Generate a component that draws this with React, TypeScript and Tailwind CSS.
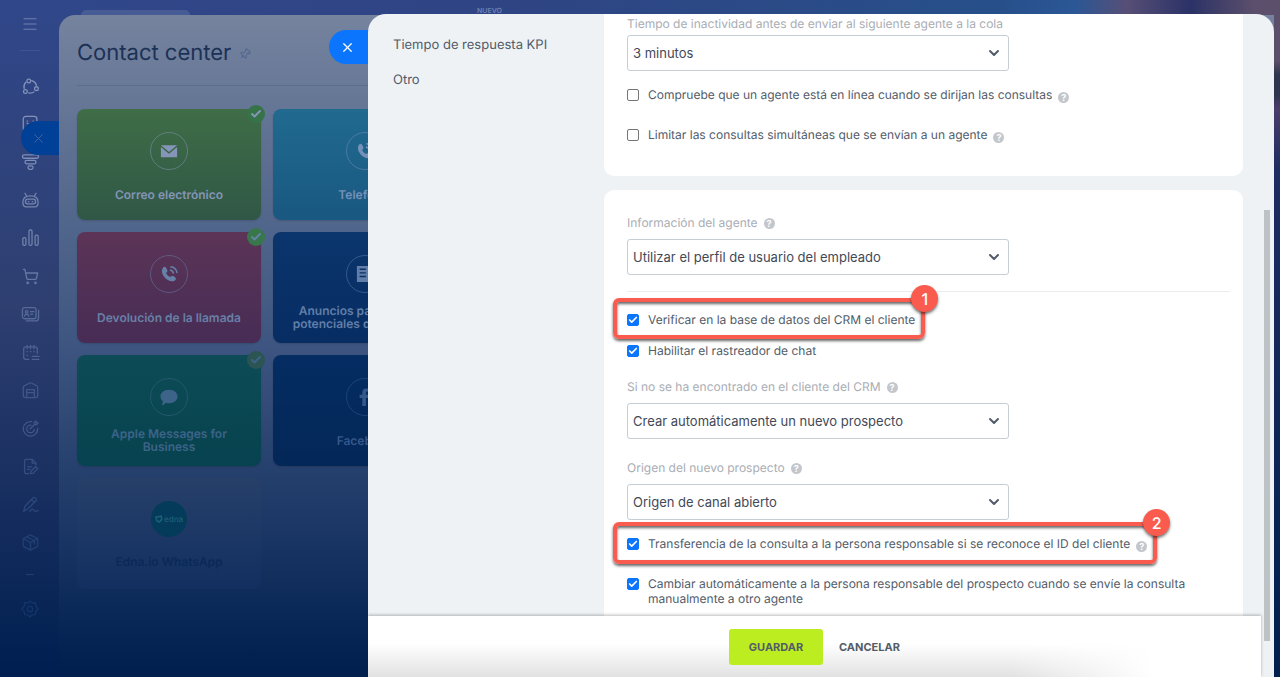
import { useId } from 'react';
import type { ReactNode } from 'react';
import { Check, ChevronDown, Menu, Pin, ShoppingCart, X } from 'lucide-react';

const RAIL_ICONS: { name: string; tone: string; art: ReactNode }[] = [
  {
    name: 'Colaboración',
    tone: 'text-[#8391bb]',
    art: (
      <>
        <circle cx="8" cy="3.500" r="2.2" />
        <circle cx="4" cy="16" r="2.2" />
        <circle cx="17" cy="12.500" r="2.2" />
        <path d="M2.500 12.500A8 8 0 0 1 4.500 5M11.500 3A8 8 0 0 1 17 8.500M14 16.500A8 8 0 0 1 8 17.500" />
      </>
    ),
  },
  {
    name: 'Feed',
    tone: 'text-[#8391bb]',
    art: (
      <>
        <rect x="1.500" y="0.500" width="16" height="17" rx="3" />
        <path d="M6 6h.5M13 6h.5M6 8.500q3.500 3 7.500 0" />
      </>
    ),
  },
  {
    name: 'CRM',
    tone: 'text-[#7f8eb5]',
    art: (
      <>
        <rect x="0.500" y="1" width="19" height="4" rx="2" />
        <rect x="3.500" y="7.500" width="13" height="4" rx="2" />
        <rect x="7" y="14" width="6" height="4" rx="2" />
      </>
    ),
  },
  {
    name: 'Automatización',
    tone: 'text-[#7585ac]',
    art: (
      <>
        <path d="M3.500 1.500l2 3.500M16.500 1.500l-2 3.500M1 12c0-5 4-7.500 9-7.500s9 2.500 9 7.500c0 4-1 5.500-4 5.500H5c-3 0-4-1.500-4-5.500z" />
        <rect x="4" y="8.500" width="12" height="5.500" rx="2.700" />
        <path d="M7.500 11.200h.6M12 11.200h.6" />
      </>
    ),
  },
  {
    name: 'Analítica',
    tone: 'text-[#7083aa]',
    art: (
      <>
        <rect x="1" y="9" width="3.600" height="9" rx="1.500" />
        <rect x="8.200" y="0" width="3.600" height="18" rx="1.500" />
        <rect x="15.400" y="6" width="3.600" height="12" rx="1.500" />
      </>
    ),
  },
  { name: 'Tienda', tone: 'text-[#6478a2]', art: <ShoppingCart width={20} height={20} strokeWidth={1.8} /> },
  {
    name: 'Contactos',
    tone: 'text-[#566b98]',
    art: (
      <>
        <rect x="0.500" y="2" width="16" height="13" rx="2.500" />
        <circle cx="5.500" cy="7" r="1.500" />
        <path d="M3 12c.5-3 4.500-3 5 0M10 6.500h4M10 9.500h2.500M19.500 5v9q0 3.500-3.500 3.500H5" />
      </>
    ),
  },
  {
    name: 'Calendario',
    tone: 'text-[#4d6292]',
    art: (
      <>
        <path d="M8 18H4.500Q2 18 2 15.500V6q0-2.500 2.500-2.500h11Q18 3.500 18 6v5M6 1.500v4M10 1.500v4M14 1.500v4M12 14.500h8M12 18h8" />
        <path d="M6 9h.5M10 9h.5M14 9h.5M6 13.500h.5" />
      </>
    ),
  },
  {
    name: 'Almacén',
    tone: 'text-[#425789]',
    art: (
      <>
        <path d="M1.500 6.500Q1.500 5 3 4.200L8.500 1.500q1.500-.7 3 0L17 4.200q1.500.8 1.500 2.300V16q0 2.500-2.500 2.500H4Q1.500 18.500 1.500 16z" />
        <path d="M5.500 18V9h9v9M5.500 12.500h9" />
      </>
    ),
  },
  {
    name: 'Objetivos',
    tone: 'text-[#425789]',
    art: (
      <path d="M11.500 2A8.500 8.500 0 1 0 18.500 10M10.500 6A4.500 4.500 0 1 0 14.500 11M9.500 10.500L15 5M14.500 5.500V3l2-2v2.500H19L17 5.500z" />
    ),
  },
  {
    name: 'Documentos',
    tone: 'text-[#364f82]',
    art: (
      <>
        <path d="M8 18.500H5Q3 18.500 3 16.500v-13Q3 1.500 5 1.500h7l4.500 4.500v2M12 1.500V6h4.500M6.500 10.500H11M6.500 13.500H9" />
        <path d="M10 18.500l.5-3L16 10l2.500 2.500L13 18z" />
      </>
    ),
  },
  {
    name: 'Firma',
    tone: 'text-[#2c487c]',
    art: (
      <>
        <path d="M2 18l1.500-6L13 2q1.500-1 3 .5T16.500 5.500L7 15l-5 3zM11 4l3.500 3.500" />
        <path d="M9 18q3-4 4.500-1.500T19 17" />
      </>
    ),
  },
  {
    name: 'Market',
    tone: 'text-[#223f74]',
    art: <path d="M10 1l8.500 4.500v9L10 19l-8.500-4.500v-9zM1.500 5.500L10 10l8.500-4.500M10 10v9M6 3.500l8.500 4.500v4" />,
  },
];

const PHONE = (
  <>
    <path d="M3 3.500C5 1 6 2 7.500 4.500S8 7.500 7 8.500s3.500 5.500 5 4.500 2-1.500 4 0 2.500 2.500 0 4.500C9.500 21-1 10 3 3.500z" fill="currentColor" />
    <path d="M11 5.500q3.500.5 4 4M11.500 2q6.500.5 7.500 7" fill="none" stroke="currentColor" strokeWidth="1.600" />
  </>
);

const TILES: { label: string; bg: string; tone: string; done: string; art: ReactNode }[] = [
  {
    label: 'Correo electrónico',
    bg: 'from-[#3f6d46] to-[#305746]',
    tone: 'text-[#8495b8]',
    done: 'bg-[#367349]',
    art: <path d="M1 3.500h18L10 11zM1 5.500l9 7.500 9-7.500V17H1z" fill="currentColor" />,
  },
  { label: 'Telefonía', bg: 'from-[#216a8f] to-[#195880]', tone: 'text-[#7590b9]', done: '', art: PHONE },
  {
    label: 'Devolución de la llamada',
    bg: 'from-[#5c3457] to-[#472c55]',
    tone: 'text-[#6780a6]',
    done: 'bg-[#38764b]',
    art: PHONE,
  },
  {
    label: 'Anuncios para clientes potenciales de Facebook',
    bg: 'from-[#0b356d] to-[#072d63]',
    tone: 'text-[#617ea8]',
    done: '',
    art: <path fillRule="evenodd" d="M1 1h13v18H1zM4 4v1.500h7V4zM4 8v1.500h7V8zM4 12v1.500h7V12zM15 5h4v13h-4z" fill="currentColor" />,
  },
  {
    label: 'Apple Messages for Business',
    bg: 'from-[#0d4c56] to-[#06424f]',
    tone: 'text-[#3d6388]',
    done: 'bg-[#2b5453]',
    art: <path d="M10 2c5.500 0 9.500 3.200 9.500 7.500S15.500 17 10 17q-2 0-3.500-.6Q4 19.500 2 19q1.500-2 1-4.200Q.5 12.500.5 9.500C.5 5.200 4.500 2 10 2z" fill="currentColor" />,
  },
  {
    label: 'Facebook',
    bg: 'from-[#052d63] to-[#032757]',
    tone: 'text-[#36578a]',
    done: '',
    art: <path d="M7 20v-9H4V7.500h3V5q0-4.500 4.500-4.500H15V4h-2q-2 0-2 1.500v2h4l-.6 3.500H11v9z" fill="currentColor" />,
  },
];

function RailIcon({ name, tone, art }: { name: string; tone: string; art: ReactNode }) {
  return (
    <button type="button" aria-label={name} className={`block h-5 w-5 shrink-0 ${tone}`}>
      <svg viewBox="0 0 20 20" className="h-[17px] w-[17px] overflow-visible" fill="none" stroke="currentColor" strokeWidth="1.5" strokeLinecap="round" strokeLinejoin="round">
        {art}
      </svg>
    </button>
  );
}

function Help() {
  return (
    <button
      type="button"
      aria-label="Ayuda"
      className="flex h-[11px] w-[11px] shrink-0 items-center justify-center rounded-full bg-[#c3c7cc] text-[9px] leading-none font-bold text-white"
    >
      ?
    </button>
  );
}

function SelectField({ label, value, help = false }: { label: string; value: string; help?: boolean }) {
  const id = useId();
  return (
    <div>
      <div className="flex h-4 items-center gap-[6px]">
        <label htmlFor={id} className="text-[12px] leading-4 whitespace-nowrap text-[#a9adb4]">{label}</label>
        {help && <Help />}
      </div>
      <div className={`relative w-[382px] max-w-full ${help ? 'mt-2' : 'mt-[3px]'}`}>
        <select
          id={id}
          defaultValue={value}
          className="block h-9 w-full appearance-none rounded-[3px] border border-[#c6cdd3] bg-white pt-[2px] pl-[5px] text-[13px] text-[#424956]"
        >
          <option>{value}</option>
        </select>
        <ChevronDown className="pointer-events-none absolute top-[10px] right-[7px] h-4 w-4 text-[#525c69]" strokeWidth={3} />
      </div>
    </div>
  );
}

function CheckRow({ label, checked = false, help = false, mark }: { label: string; checked?: boolean; help?: boolean; mark?: number }) {
  return (
    <div className="relative flex w-fit items-start gap-[6px]">
      <label className="flex items-start gap-[9px] text-[12px] leading-[15px] text-[#525c69]">
        <input
          type="checkbox"
          defaultChecked={checked}
          className="peer mt-[2px] h-3 w-3 shrink-0 appearance-none rounded-[2px] border border-[#767676] bg-white checked:border-[#0b75fe] checked:bg-[#0b75fe]"
        />
        <Check className="pointer-events-none absolute top-[3px] left-[1px] hidden h-[10px] w-[10px] text-white peer-checked:block" strokeWidth={4} />
        <span>{label}</span>
      </label>
      {help && <div className="mt-[5px]"><Help /></div>}
      {mark && (
        <div className="pointer-events-none absolute -top-[14px] -right-[10px] -bottom-[12px] -left-[14px] rounded-[6px] border-4 border-[#f95c4f] shadow-[0_2px_3px_#0009,inset_0_2px_3px_#0009]">
          <span className="absolute -top-[17px] -right-[17px] flex h-[27px] w-[27px] items-center justify-center rounded-full bg-[#f95c4f] text-[16px] font-medium text-white shadow-[0_2px_3px_#0008]">
            {mark}
          </span>
        </div>
      )}
    </div>
  );
}

function Rail() {
  return (
    <nav className="flex w-[59px] shrink-0 flex-col items-center bg-linear-to-b from-[#30478a] via-[#2e3f70] via-45% to-[#001f50] pt-[15px]">
      <button type="button" aria-label="Menú" className="text-[#7180b0]">
        <Menu className="h-[18px] w-[18px]" strokeWidth={1.5} />
      </button>
      <div className="mt-[17px] h-px w-5 bg-[#40548f]" />
      <div className="mt-[25px] flex flex-col gap-[18px] pl-[5px]">
        {RAIL_ICONS.map((item) => (
          <RailIcon key={item.name} {...item} />
        ))}
      </div>
      <div className="mt-[22px] h-px w-2 bg-[#223f74]" />
      <svg viewBox="0 0 20 20" className="mt-[25px] h-[18px] w-[18px] text-[#14346a]" fill="none" stroke="currentColor" strokeWidth="1.5">
        <circle cx="10" cy="10" r="3" />
        <path strokeLinejoin="round" d="M10 1l2.500 2.300 3.600-.2.200 3.600L19 10l-2.700 2.700-.2 3.600-3.600.200L10 19l-2.500-2.500-3.600-.2-.2-3.600L1 10l2.700-3.300.2-3.600 3.600.200z" />
      </svg>
    </nav>
  );
}

function ContactCenter() {
  return (
    <section className="mt-[15px] min-w-0 flex-1 overflow-hidden rounded-tl-[16px] bg-linear-to-b from-[#75839e] via-[#3d5580] via-50% to-[#001e4e] pl-[18px]">
      <header className="flex h-[71px] items-center gap-2 border-b border-[#5b6e92]">
        <h1 className="pt-[6px] text-[22px] leading-7 text-[#1b3156]">Contact center</h1>
        <Pin className="mt-2 h-3 w-3 rotate-45 text-[#52668e]" strokeWidth={2} />
      </header>
      <div className="mt-[23px] grid grid-cols-[repeat(auto-fill,184px)] gap-3">
        <div className="contents">
          {TILES.map((tile, i) => (
            <article
              key={tile.label}
              className={`relative flex h-[111px] flex-col items-center rounded-[8px] bg-linear-to-b pt-[23px] shadow-[0_1px_2px_#0002] ${i % 2 ? 'col-start-2' : 'col-start-1'} ${tile.bg} ${tile.tone}`}
            >
              <div className="flex h-[38px] w-[38px] shrink-0 items-center justify-center rounded-full border border-current/50">
                <svg viewBox="0 0 20 20" className="h-[18px] w-[18px]">{tile.art}</svg>
              </div>
              <div className="mt-[10px] flex h-7 w-full items-center justify-center px-4 text-center text-[12px] leading-[13px] font-semibold">
                {tile.label}
              </div>
              {tile.done && (
                <span className={`absolute -top-[4px] -right-[4px] flex h-[18px] w-[18px] items-center justify-center rounded-full ${tile.done}`}>
                  <Check className="h-3 w-3" strokeWidth={4} />
                </span>
              )}
            </article>
          ))}
        </div>
        <article className="col-start-1 flex h-[111px] flex-col items-center rounded-[8px] bg-linear-to-b from-[#264069] to-[#122f60] pt-[23px]">
          <div className="flex h-9 w-9 items-center justify-center rounded-full bg-[#053b5a] text-[8px] font-medium text-[#1d6077]">
            <svg viewBox="0 0 8 8" className="mr-px h-2 w-2" fill="none" stroke="currentColor" strokeWidth="1.500">
              <path d="M1 2q3 0 5-1 2 4-2 6Q1 6 1 2z" />
            </svg>
            edna
          </div>
          <div className="mt-[18px] text-[12px] leading-[13px] font-semibold text-[#0b2958]">Edna.io WhatsApp</div>
        </article>
      </div>
      <h2 className="mt-[30px] text-[17px] leading-6 text-[#072557]">Soluciones de los socios</h2>
    </section>
  );
}

function SettingsDrawer() {
  return (
    <div className="absolute top-[14px] right-[6px] bottom-0 left-[368px]">
      <button type="button" aria-label="Cerrar" className="absolute top-[16px] -left-[39px] flex h-[34px] w-[57px] items-center rounded-l-full bg-[#0b75fe] pl-[11px] text-white">
        <X className="h-[15px] w-[15px]" strokeWidth={2} />
      </button>
      <div role="dialog" aria-label="Canal abierto" className="relative flex h-full overflow-hidden rounded-t-[18px] bg-[#eef2f5]">
        <div className="flex min-w-0 flex-1 flex-col">
          <div className="flex min-h-0 flex-1">
            <nav className="flex w-[236px] shrink-0 flex-col gap-[15px] pt-[21px] pl-[25px] text-[13px] leading-5 text-[#525c69]">
              <a href="#kpi">Tiempo de respuesta KPI</a>
              <a href="#otro">Otro</a>
            </nav>
            <form id="canal" className="mr-[18px] flex min-w-0 flex-1 flex-col gap-[14px] overflow-hidden">
              <section className="shrink-0 rounded-b-[10px] bg-white px-[23px] pt-[2px] pb-[33px]">
                <SelectField label="Tiempo de inactividad antes de enviar al siguiente agente a la cola" value="3 minutos" />
                <div className="mt-[16px] flex flex-col gap-[24px]">
                  <CheckRow label="Compruebe que un agente está en línea cuando se dirijan las consultas" help />
                  <CheckRow label="Limitar las consultas simultáneas que se envían a un agente" help />
                </div>
              </section>
              <section className="shrink-0 rounded-[10px] bg-white pt-[25px] pr-[13px] pb-10 pl-[23px]">
                <SelectField label="Información del agente" value="Utilizar el perfil de usuario del empleado" help />
                <div className="mt-4 mb-5 h-px bg-[#eaedf0]" />
                <div className="flex flex-col gap-4">
                  <CheckRow label="Verificar en la base de datos del CRM el cliente" checked mark={1} />
                  <CheckRow label="Habilitar el rastreador de chat" checked />
                </div>
                <div className="mt-[21px] mb-4 flex flex-col gap-[21px]">
                  <SelectField label="Si no se ha encontrado en el cliente del CRM" value="Crear automáticamente un nuevo prospecto" help />
                  <SelectField label="Origen del nuevo prospecto" value="Origen de canal abierto" help />
                </div>
                <div className="flex max-w-[560px] flex-col gap-6">
                  <CheckRow label="Transferencia de la consulta a la persona responsable si se reconoce el ID del cliente" checked help mark={2} />
                  <CheckRow label="Cambiar automáticamente a la persona responsable del prospecto cuando se envíe la consulta manualmente a otro agente" checked />
                </div>
              </section>
            </form>
          </div>
          <footer className="relative flex h-[61px] shrink-0 items-center justify-center gap-4 bg-[linear-gradient(to_right,transparent_72%,white_88%),linear-gradient(to_bottom,white_45%,#e2e2e2)] pt-px text-[11px] font-bold text-[#535c69] shadow-[0_-1px_3px_#0004]">
            <button type="submit" form="canal" className="h-9 w-[94px] rounded-[3px] bg-[#bbed21]">GUARDAR</button>
            <button type="button">CANCELAR</button>
          </footer>
        </div>
        <div className="flex w-[13px] shrink-0 flex-col pt-[196px] pb-9 pl-[3px]">
          <div className="w-[6px] flex-1 bg-[#bdc2c4]" />
        </div>
      </div>
    </div>
  );
}

export default function App() {
  return (
    <div className="relative flex h-screen overflow-hidden bg-[linear-gradient(to_right,#30478a,#2f4483_40%,#27508a_78%,#2b5796_84%,#574f76_88%,#2b3267_93%,#5c4f6b_98%)] font-[Inter,'Liberation_Sans',sans-serif] [text-rendering:geometricPrecision]">
      <Rail />
      <ContactCenter />
      <div className="absolute top-[10px] left-[81px] h-[5px] w-[109px] rounded-t-[6px] bg-[#475c95]" />
      <span className="absolute top-[7px] left-[477px] text-[7px] leading-2 font-semibold text-[#6d82b5]">NUEVO</span>
      <button type="button" aria-label="Cerrar panel" className="absolute top-[121px] left-[21px] flex h-[34px] w-[38px] items-center rounded-l-full bg-[#004096] pl-[10px] text-[#45659f]">
        <X className="h-[15px] w-[15px]" strokeWidth={1.5} />
      </button>
      <div className="absolute top-0 right-0 bottom-0 w-[6px] bg-[linear-gradient(to_bottom,#5c4f6b_9%,#2f3550_11%,#2f3550_14%,#4a3d6b_16%,#1d2c62_25%,#001e4e)]" />
      <SettingsDrawer />
    </div>
  );
}
